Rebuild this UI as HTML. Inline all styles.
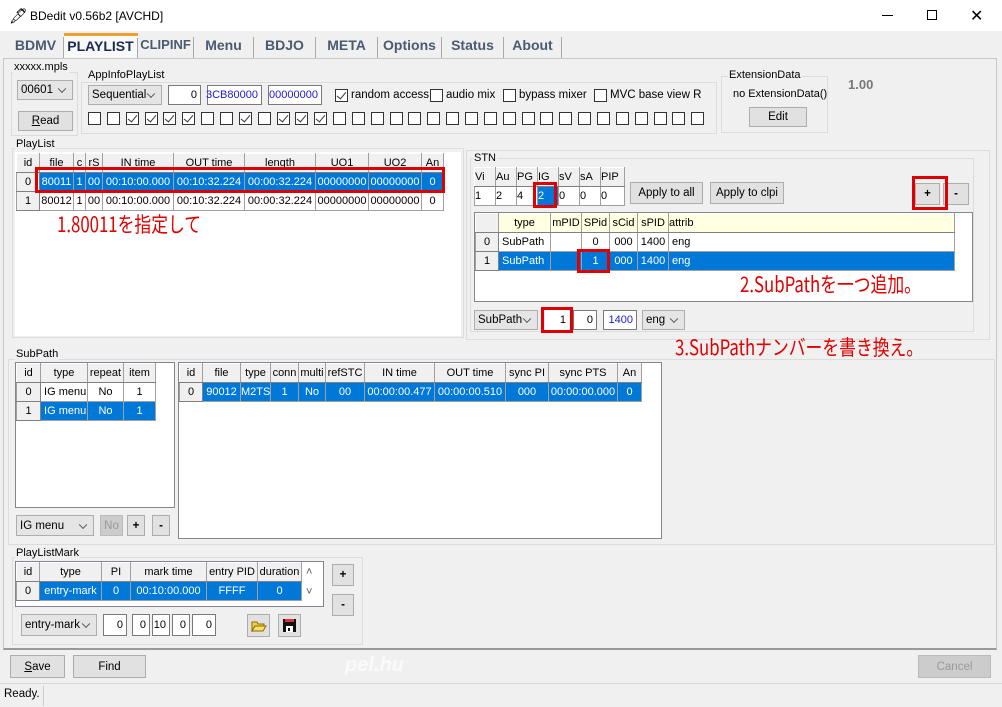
<!DOCTYPE html>
<html><head><meta charset="utf-8"><style>
*{box-sizing:border-box;margin:0;padding:0}
body{width:1002px;height:707px;background:#f0f0f0;font-family:"Liberation Sans",sans-serif;font-size:11.5px;color:#000;position:relative;overflow:hidden}
.a{position:absolute;white-space:nowrap}
.grp{position:absolute;border:1px solid #dcdcdc}
.lbl{position:absolute;font-size:11px;background:#f0f0f0;padding:0 1px;white-space:nowrap}
.btn{position:absolute;background:#e1e1e1;border:1px solid #adadad;text-align:center;font-size:11.5px;display:flex;align-items:center;justify-content:center}
.inp{position:absolute;background:#fff;border:1px solid #7a7a7a;font-size:11px;text-align:right;padding-right:3px;display:flex;align-items:center;justify-content:flex-end}
.cmb{position:absolute;background:#e5e5e5;border:1px solid #adadad;font-size:11.5px;padding-left:3px;display:flex;align-items:center}
.cmb:after{content:"";position:absolute;right:7px;top:50%;width:5px;height:5px;border-right:1px solid #555;border-bottom:1px solid #555;transform:translateY(-70%) rotate(45deg)}
.cb{position:absolute;width:13px;height:13px;border:1px solid #333;background:#fff}
.cb.k:after{content:"";position:absolute;left:3px;top:0px;width:4px;height:8px;border-right:1px solid #333;border-bottom:1px solid #333;transform:rotate(40deg)}
table{position:absolute;border-collapse:collapse;table-layout:fixed;font-size:11px}
td{border:1px solid #a0a0a0;height:19px;padding:0;white-space:nowrap;overflow:hidden;text-align:center}
td.h{background:#f0f0f0;border-color:#a0a0a0 #808080 #808080 #a0a0a0}
tr.hd td{background:#f0f0f0;border-color:#fff #a0a0a0 #808080 #fff}
.s{background:#0078d7;color:#fff}
.red{position:absolute;border:3px solid #e00000}
.rt{position:absolute;color:#e00000;font-size:21px;font-family:"Liberation Sans Narrow","Noto Sans CJK JP",sans-serif;white-space:nowrap;transform:scaleX(.8);transform-origin:left}
.tab{position:absolute;top:37px;font-weight:bold;font-size:14px;color:#4a5a70;height:21px;text-align:center;border-right:1px solid #aaa}
.wb{position:absolute;background:#fff;border:1px solid #828790}
</style></head><body>
<div class="a" style="left:0;top:0;width:1002px;height:31px;background:#fff"></div>
<div class="a" style="left:9px;top:7px;font-size:15px">🖋</div>
<div class="a" style="left:30px;top:9px;font-size:12px">BDedit v0.56b2 [AVCHD]</div>
<div class="a" style="left:882px;top:15px;width:11px;height:1px;background:#000"></div>
<div class="a" style="left:927px;top:10px;width:10px;height:10px;border:1px solid #000"></div>
<div class="a" style="left:970px;top:6px;font-size:16px">✕</div>
<div class="tab" style="left:8px;width:56px">BDMV</div>
<div class="a" style="left:64px;top:33px;width:74px;height:26px;background:#f8f8f8;border-top:3px solid #f0a030"></div>
<div class="tab" style="left:64px;width:74px;top:38px;color:#1a2a50;font-size:14px">PLAYLIST</div>
<div class="tab" style="left:138px;width:56px;font-size:13px">CLIPINF</div>
<div class="tab" style="left:194px;width:60px">Menu</div>
<div class="tab" style="left:254px;width:62px">BDJO</div>
<div class="tab" style="left:316px;width:62px">META</div>
<div class="tab" style="left:378px;width:64px">Options</div>
<div class="tab" style="left:442px;width:62px">Status</div>
<div class="tab" style="left:504px;width:58px">About</div>
<div class="a" style="left:3px;top:58px;width:994px;height:592px;border:1px solid #c8c8c8;border-bottom:2px solid #999"></div>
<div class="grp" style="left:11px;top:72px;width:67px;height:64px"></div>
<div class="lbl" style="left:13px;top:61px">xxxxx.mpls</div>
<div class="cmb" style="left:17px;top:80px;width:56px;height:20px">00601</div>
<div class="btn" style="left:18px;top:111px;width:55px;height:20px"><u>R</u>ead</div>
<div class="grp" style="left:81px;top:82px;width:636px;height:52px"></div>
<div class="lbl" style="left:87px;top:69px">AppInfoPlayList</div>
<div class="cmb" style="left:88px;top:85px;width:74px;height:20px">Sequential</div>
<div class="inp" style="left:168px;top:85px;width:33px;height:20px">0</div>
<div class="inp" style="left:207px;top:85px;width:55px;height:20px;color:#1a1acc">3CB80000</div>
<div class="inp" style="left:268px;top:85px;width:54px;height:20px;color:#1a1acc">00000000</div>
<div class="cb k" style="left:335px;top:89px"></div><div class="a" style="left:351px;top:89px">random access</div>
<div class="cb" style="left:430px;top:89px"></div><div class="a" style="left:446px;top:89px">audio mix</div>
<div class="cb" style="left:503px;top:89px"></div><div class="a" style="left:519px;top:89px">bypass mixer</div>
<div class="cb" style="left:594px;top:89px"></div><div class="a" style="left:610px;top:89px">MVC base view R</div>
<div id="cbs"></div>
<div class="grp" style="left:721px;top:76px;width:107px;height:57px"></div>
<div class="lbl" style="left:728px;top:69px">ExtensionData</div>
<div class="a" style="left:733px;top:88px;font-size:11px">no ExtensionData()</div>
<div class="btn" style="left:749px;top:107px;width:58px;height:20px">Edit</div>
<div class="a" style="left:848px;top:77px;font-weight:bold;color:#777;font-size:13px">1.00</div>
<div class="grp" style="left:12px;top:148px;width:452px;height:190px"></div>
<div class="lbl" style="left:15px;top:138px">PlayList</div>
<div class="wb" style="left:15px;top:152px;width:446px;height:184px;border:none;background:#fff"></div>
<table style="left:16px;top:153px;width:427px">
<colgroup><col style="width:23px"><col style="width:34px"><col style="width:12px"><col style="width:17px"><col style="width:71px"><col style="width:71px"><col style="width:71px"><col style="width:53px"><col style="width:53px"><col style="width:22px"></colgroup>
<tr class="hd"><td>id</td><td>file</td><td>c</td><td>rS</td><td>IN time</td><td>OUT time</td><td>length</td><td>UO1</td><td>UO2</td><td>An</td></tr>
<tr><td class="h">0</td><td class="s">80011</td><td class="s">1</td><td class="s">00</td><td class="s">00:10:00.000</td><td class="s">00:10:32.224</td><td class="s">00:00:32.224</td><td class="s">00000000</td><td class="s">00000000</td><td class="s">0</td></tr>
<tr><td class="h">1</td><td>80012</td><td>1</td><td>00</td><td>00:10:00.000</td><td>00:10:32.224</td><td>00:00:32.224</td><td>00000000</td><td>00000000</td><td>0</td></tr>
</table>
<div class="red" style="left:35px;top:167px;width:410px;height:26px"></div>
<div class="rt" style="left:57px;top:209px">1.80011を指定して</div>
<div class="grp" style="left:466px;top:150px;width:524px;height:190px"></div>
<div class="grp" style="left:470px;top:158px;width:504px;height:174px"></div>
<div class="lbl" style="left:473px;top:152px">STN</div>
<table style="left:474px;top:167px;width:150px;background:#fff">
<colgroup><col style="width:21px"><col style="width:21px"><col style="width:21px"><col style="width:21px"><col style="width:21px"><col style="width:21px"><col style="width:24px"></colgroup>
<tr class="hd"><td style="text-align:left">Vi</td><td style="text-align:left">Au</td><td style="text-align:left">PG</td><td style="text-align:left">IG</td><td style="text-align:left">sV</td><td style="text-align:left">sA</td><td style="text-align:left">PIP</td></tr>
<tr><td style="text-align:left">1</td><td style="text-align:left">2</td><td style="text-align:left">4</td><td class="s" style="text-align:left">2</td><td style="text-align:left">0</td><td style="text-align:left">0</td><td style="text-align:left">0</td></tr>
</table>
<div class="red" style="left:533px;top:182px;width:24px;height:26px"></div>
<div class="btn" style="left:630px;top:182px;width:73px;height:22px">Apply to all</div>
<div class="btn" style="left:710px;top:182px;width:74px;height:22px">Apply to clpi</div>
<div class="btn" style="left:915px;top:183px;width:25px;height:22px;font-weight:bold">+</div>
<div class="btn" style="left:943px;top:183px;width:26px;height:22px;font-weight:bold">-</div>
<div class="red" style="left:912px;top:176px;width:36px;height:34px"></div>
<div class="wb" style="left:474px;top:212px;width:499px;height:90px"></div>
<table style="left:475px;top:213px;width:479px;background:#fff">
<colgroup><col style="width:23px"><col style="width:52px"><col style="width:31px"><col style="width:28px"><col style="width:28px"><col style="width:31px"><col style="width:286px"></colgroup>
<tr class="hd"><td></td><td style="background:#ffffe1">type</td><td style="background:#ffffe1">mPID</td><td style="background:#ffffe1">SPid</td><td style="background:#ffffe1">sCid</td><td style="background:#ffffe1">sPID</td><td style="background:#ffffe1;text-align:left">attrib</td></tr>
<tr><td class="h">0</td><td style="text-align:left">&nbsp;SubPath</td><td></td><td>0</td><td>000</td><td>1400</td><td style="text-align:left">&nbsp;eng</td></tr>
<tr><td class="h">1</td><td class="s" style="text-align:left">&nbsp;SubPath</td><td class="s"></td><td class="s">1</td><td class="s">000</td><td class="s">1400</td><td class="s" style="text-align:left">&nbsp;eng</td></tr>
</table>
<div class="red" style="left:577px;top:249px;width:33px;height:24px"></div>
<div class="rt" style="left:740px;top:269px">2.SubPathを一つ追加。</div>
<div class="cmb" style="left:474px;top:310px;width:64px;height:20px">SubPath</div>
<div class="inp" style="left:573px;top:310px;width:24px;height:20px">0</div>
<div class="inp" style="left:603px;top:310px;width:34px;height:20px;color:#1a1acc">1400</div>
<div class="cmb" style="left:642px;top:310px;width:43px;height:20px">eng</div>
<div class="inp" style="left:545px;top:310px;width:24px;height:20px;border:none">1</div>
<div class="red" style="left:541px;top:307px;width:32px;height:26px"></div>
<div class="rt" style="left:675px;top:332px">3.SubPathナンバーを書き換え。</div>
<div class="grp" style="left:8px;top:359px;width:987px;height:186px"></div>
<div class="lbl" style="left:15px;top:348px">SubPath</div>
<div class="wb" style="left:15px;top:362px;width:160px;height:146px"></div>
<table style="left:16px;top:363px;width:139px;background:#fff">
<colgroup><col style="width:24px"><col style="width:47px"><col style="width:36px"><col style="width:32px"></colgroup>
<tr class="hd"><td>id</td><td>type</td><td>repeat</td><td>item</td></tr>
<tr><td class="h">0</td><td style="text-align:left">&nbsp;IG menu</td><td>No</td><td>1</td></tr>
<tr><td class="h">1</td><td class="s" style="text-align:left">&nbsp;IG menu</td><td class="s">No</td><td class="s">1</td></tr>
</table>
<div class="wb" style="left:178px;top:362px;width:484px;height:177px"></div>
<table style="left:179px;top:363px;width:462px;background:#fff">
<colgroup><col style="width:23px"><col style="width:38px"><col style="width:30px"><col style="width:28px"><col style="width:27px"><col style="width:39px"><col style="width:70px"><col style="width:71px"><col style="width:43px"><col style="width:69px"><col style="width:24px"></colgroup>
<tr class="hd"><td>id</td><td>file</td><td>type</td><td>conn</td><td>multi</td><td>refSTC</td><td>IN time</td><td>OUT time</td><td>sync PI</td><td>sync PTS</td><td>An</td></tr>
<tr><td class="h">0</td><td class="s">90012</td><td class="s">M2TS</td><td class="s">1</td><td class="s">No</td><td class="s">00</td><td class="s">00:00:00.477</td><td class="s">00:00:00.510</td><td class="s">000</td><td class="s">00:00:00.000</td><td class="s">0</td></tr>
</table>
<div class="cmb" style="left:16px;top:515px;width:78px;height:21px">IG menu</div>
<div class="btn" style="left:100px;top:515px;width:23px;height:21px;color:#999;background:#ccc;border-color:#bbb">No</div>
<div class="btn" style="left:127px;top:515px;width:18px;height:21px;font-weight:bold">+</div>
<div class="btn" style="left:152px;top:515px;width:18px;height:21px;font-weight:bold">-</div>
<div class="grp" style="left:12px;top:557px;width:351px;height:88px"></div>
<div class="lbl" style="left:15px;top:547px">PlayListMark</div>
<div class="wb" style="left:15px;top:561px;width:309px;height:46px"></div>
<table style="left:16px;top:562px;width:285px;background:#fff">
<colgroup><col style="width:23px"><col style="width:62px"><col style="width:29px"><col style="width:76px"><col style="width:51px"><col style="width:44px"></colgroup>
<tr class="hd"><td>id</td><td>type</td><td>PI</td><td>mark time</td><td>entry PID</td><td>duration</td></tr>
<tr><td class="h">0</td><td class="s">entry-mark</td><td class="s">0</td><td class="s">00:10:00.000</td><td class="s">FFFF</td><td class="s">0</td></tr>
</table>
<div class="a" style="left:306px;top:566px;font-size:11px;color:#555">˄</div>
<div class="a" style="left:306px;top:586px;font-size:11px;color:#555">˅</div>
<div class="btn" style="left:332px;top:564px;width:22px;height:22px;font-weight:bold">+</div>
<div class="btn" style="left:332px;top:594px;width:22px;height:22px;font-weight:bold">-</div>
<div class="cmb" style="left:21px;top:614px;width:76px;height:22px">entry-mark</div>
<div class="inp" style="left:103px;top:614px;width:24px;height:22px">0</div>
<div class="inp" style="left:132px;top:614px;width:18px;height:22px">0</div>
<div class="inp" style="left:152px;top:614px;width:18px;height:22px">10</div>
<div class="inp" style="left:172px;top:614px;width:18px;height:22px">0</div>
<div class="inp" style="left:192px;top:614px;width:24px;height:22px">0</div>
<div class="btn" style="left:247px;top:614px;width:23px;height:23px"><svg width="16" height="12"><path d="M1 2h5l1 2h6v2H4L1 11Z" fill="#f5d040" stroke="#8a6a00"/><path d="M4 6h11l-3 5H1Z" fill="#fbe070" stroke="#8a6a00"/></svg></div>
<div class="btn" style="left:278px;top:614px;width:23px;height:23px"><svg width="15" height="15"><rect x="1" y="1" width="13" height="13" fill="#111"/><rect x="3" y="1" width="9" height="3" fill="#d33"/><rect x="4" y="8" width="7" height="6" fill="#fff"/><rect x="6" y="10" width="2" height="3" fill="#111"/></svg></div>
<div class="btn" style="left:10px;top:655px;width:55px;height:23px"><u>S</u>ave</div>
<div class="btn" style="left:73px;top:655px;width:73px;height:23px">Find</div>
<div class="a" style="left:345px;top:654px;font-size:20px;font-weight:bold;font-style:italic;color:#fafafa">pel.hu</div>
<div class="btn" style="left:918px;top:655px;width:73px;height:23px;color:#999;background:#ccc;border-color:#bbb">Cancel</div>
<div class="a" style="left:0;top:683px;width:1002px;height:1px;background:#d8d8d8"></div>
<div class="a" style="left:4px;top:688px">Ready.</div>
<div class="a" style="left:43px;top:686px;width:1px;height:20px;background:#ccc"></div>
<script>
var c=document.getElementById('cbs'),k=[2,3,4,5,8,10,11,12],h='';
for(var i=0;i<33;i++){h+='<div class="cb'+(k.indexOf(i)>=0?' k':'')+'" style="left:'+(88+i*18.85)+'px;top:112px"></div>';}
c.innerHTML=h;
</script>
</body></html>
